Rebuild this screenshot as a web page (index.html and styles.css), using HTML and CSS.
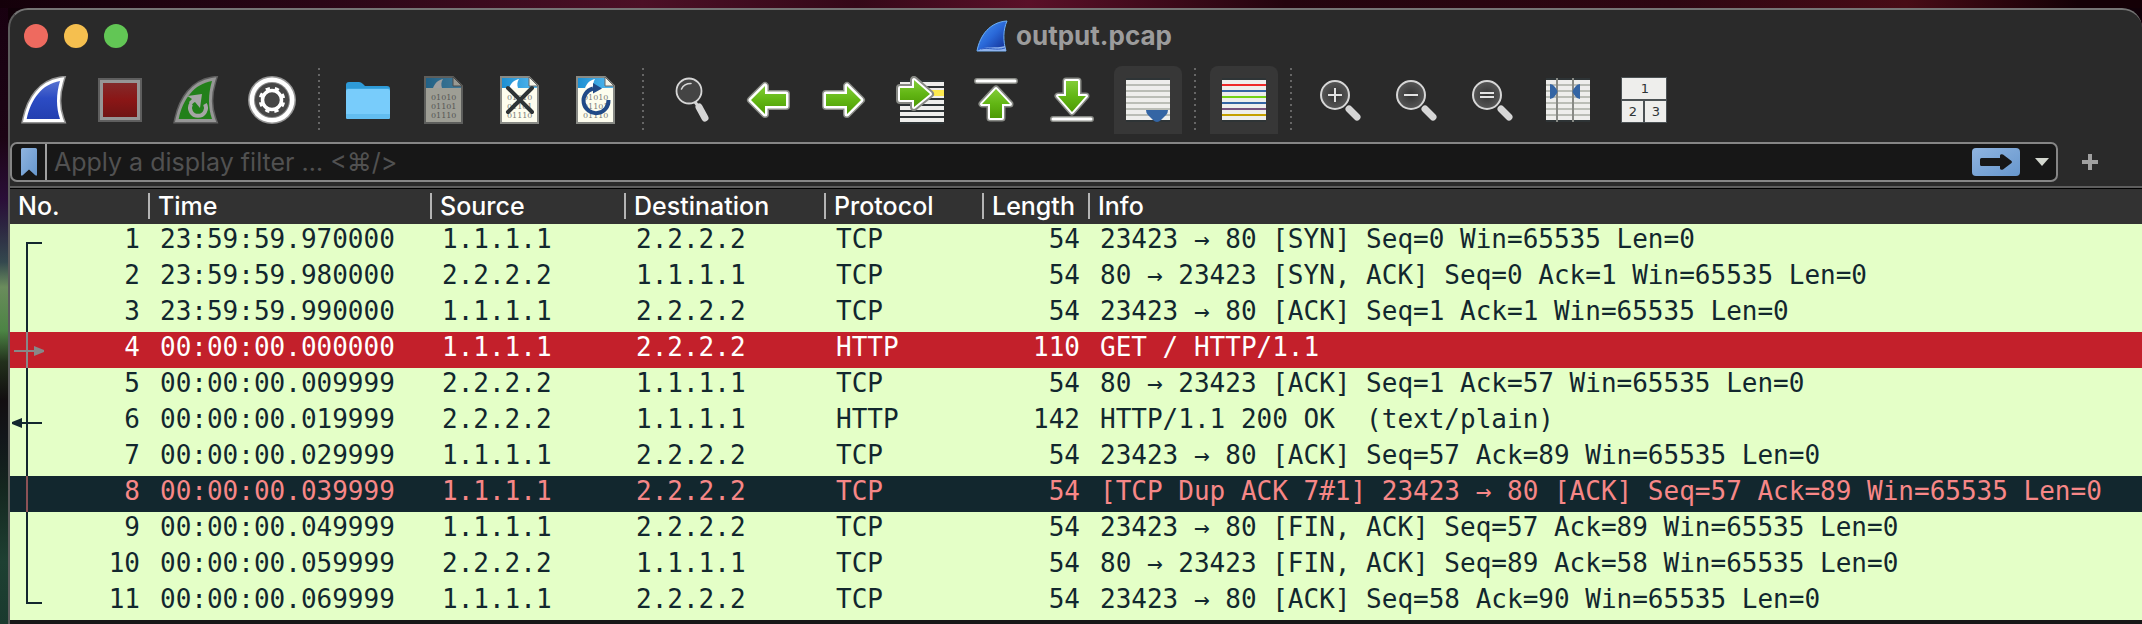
FILE: index.html
```html
<!DOCTYPE html>
<html lang="en">
<head>
<meta charset="utf-8">
<title>output.pcap</title>
<link rel="stylesheet" href="styles.css">
</head>
<body>
<svg class="defs" aria-hidden="true">
  <defs>
    <linearGradient id="g-blue" x1="0" y1="0" x2="0" y2="1"><stop offset="0" stop-color="#5872d0"/><stop offset=".45" stop-color="#2c4cc4"/><stop offset="1" stop-color="#2440b0"/></linearGradient>
    <linearGradient id="g-red" x1="0" y1="0" x2="0" y2="1"><stop offset="0" stop-color="#832a2a"/><stop offset=".5" stop-color="#8a1616"/><stop offset="1" stop-color="#701414"/></linearGradient>
    <linearGradient id="g-green" x1="0" y1="0" x2="0" y2="1"><stop offset="0" stop-color="#82cc38"/><stop offset=".5" stop-color="#62b614"/><stop offset="1" stop-color="#4e9a06"/></linearGradient>
    <linearGradient id="g-title" x1="0" y1="0" x2="1" y2="1"><stop offset="0" stop-color="#4c9df5"/><stop offset=".5" stop-color="#2a68d8"/><stop offset="1" stop-color="#10288c"/></linearGradient>
    <linearGradient id="g-sky" x1="0" y1="0" x2="1" y2="0"><stop offset="0" stop-color="#1c8fd2"/><stop offset="1" stop-color="#55b9f0"/></linearGradient>
    <linearGradient id="g-apply" x1="0" y1="0" x2="1" y2="1"><stop offset="0" stop-color="#8fb4e0"/><stop offset="1" stop-color="#6797cd"/></linearGradient>
    <radialGradient id="g-lens"><stop offset="0" stop-color="#333"/><stop offset="1" stop-color="#575757"/></radialGradient>
    <symbol id="doc" viewBox="0 0 48 48">
      <path d="M5 1H33L42 10V47H5Z" fill="#fdfdee" stroke="#888a85" stroke-width="2"/>
      <path d="M6 2H33V10H41V12H6Z" fill="url(#g-sky)"/>
      <path d="M13 12C15 7 18 4 23 3C21 6 21 9 22 12Z" fill="#fff"/>
      <path d="M33 1V10H42Z" fill="#f4f4e8" stroke="#666" stroke-width="1"/>
      <g class="bits"><text x="11" y="24">01010</text><text x="11" y="33">01101</text><text x="11" y="42">01110</text></g>
    </symbol>
    <symbol id="arrow" viewBox="0 0 48 48">
      <path d="M41 24L27 10V18H6V30H27V38Z" fill="#888a85" stroke="#888a85" stroke-width="8" stroke-linejoin="round"/>
      <path d="M41 24L27 10V18H6V30H27V38Z" fill="url(#g-green)" stroke="#fff" stroke-width="5" stroke-linejoin="round" paint-order="stroke"/>
    </symbol>
    <symbol id="lens" viewBox="0 0 48 48">
      <path d="M33 33L41 41" stroke="#d6d6d6" stroke-width="7" stroke-linecap="round"/>
      <circle cx="19" cy="19" r="14" fill="url(#g-lens)" stroke="#d6d6d6" stroke-width="2"/>
    </symbol>
  </defs>
</svg>

<main class="window">
  <header class="titlebar">
    <div class="lights">
      <button class="light close" aria-label="Close"></button>
      <button class="light minimize" aria-label="Minimize"></button>
      <button class="light zoom" aria-label="Zoom"></button>
    </div>
    <h1 class="title">
      <svg class="title-icon" viewBox="0 0 32 32"><path d="M1 31C4 15 14 2 31 1C27 10 27 21 30 31Z" fill="url(#g-title)" stroke="#6fb0f4" stroke-width="1"/><path d="M1.500 31C9 25 20 29 29 26L30 31Z" fill="#8fb3ee"/><path d="M5 29C13 27 20 31 29 28" fill="none" stroke="#2f5cc0" stroke-width="1"/></svg>
      output.pcap
    </h1>
  </header>

  <nav class="toolbar" aria-label="Main toolbar">
    <button class="tool" aria-label="Start capture"><svg viewBox="0 0 48 48"><path d="M6.700 43C11 23 22 8 40 5C36 18 36 32 40 43Z" fill="none" stroke="#949494" stroke-width="9"/><path d="M6.700 43C11 23 22 8 40 5C36 18 36 32 40 43Z" fill="url(#g-blue)" stroke="#fff" stroke-width="6" paint-order="stroke"/></svg></button>
    <button class="tool" aria-label="Stop capture"><svg viewBox="0 0 48 48"><path d="M2 2H46V46H2Z" fill="#5e5e5e"/><path d="M4 4H44V44H4Z" fill="#969696"/><path d="M7 7H41V41H7Z" fill="url(#g-red)"/></svg></button>
    <button class="tool" aria-label="Restart capture"><svg viewBox="0 0 48 48"><path d="M6.700 43C11 23 22 8 40 5C36 18 36 32 40 43Z" fill="none" stroke="#5e5e5e" stroke-width="9"/><path d="M6.700 43C11 23 22 8 40 5C36 18 36 32 40 43Z" fill="#22801a" stroke="#969696" stroke-width="6" paint-order="stroke"/><path d="M19 28A8 8 0 1 0 33 28" fill="none" stroke="#a6a6a6" stroke-width="4"/><path d="M15.500 20L30 18L28 32L23 26C21 27 20 28 19 30L17 26L20 23Z" fill="#a6a6a6"/></svg></button>
    <button class="tool" aria-label="Capture options"><svg viewBox="0 0 48 48"><circle cx="24" cy="24" r="24" fill="#969696"/><circle cx="24" cy="24" r="22.500" fill="#fff"/><circle cx="24" cy="24" r="18" fill="#888"/><circle cx="24" cy="24" r="17" fill="#464646"/><circle cx="24" cy="24" r="9.500" fill="none" stroke="#fff" stroke-width="3.500"/><circle cx="24" cy="24" r="11.700" fill="none" stroke="#fff" stroke-width="3.200" stroke-dasharray="4.200 4.989" stroke-dashoffset="-2.500"/></svg></button>
    <span class="sep"></span>
    <button class="tool" aria-label="Open file"><svg viewBox="0 0 48 48"><path d="M2 9Q2 6 5 6H15Q17 6 19 8L21 10H43Q46 10 46 13V20H2Z" fill="#2e9bd8"/><rect x="2" y="12" width="44" height="31" rx="2" fill="#3aa5e0"/><rect x="2" y="13" width="44" height="30" rx="2" fill="#78ccfb"/><path d="M2 38H46V41Q46 43 44 43H4Q2 43 2 41Z" fill="#62bdf0"/></svg></button>
    <button class="tool" aria-label="Save file" disabled><svg class="dim" viewBox="0 0 48 48"><use href="#doc"/></svg></button>
    <button class="tool" aria-label="Close file"><svg viewBox="0 0 48 48"><use href="#doc"/><path d="M12 12L36 36M36 12L12 36" stroke="#2e3436" stroke-width="4" stroke-linecap="round"/></svg></button>
    <button class="tool" aria-label="Reload file"><svg viewBox="0 0 48 48"><use href="#doc"/><path d="M36.500 24A12.500 12.500 0 1 1 21 12.500" fill="none" stroke="#204a87" stroke-width="4"/><path d="M21 7L30 12.500L21 17.500Z" fill="#204a87"/></svg></button>
    <span class="sep"></span>
    <button class="tool" aria-label="Find packet"><svg viewBox="0 0 48 48"><path d="M27 26L30 30" stroke="#d6d6d6" stroke-width="3"/><path d="M31 31L37 42" stroke="#d6d6d6" stroke-width="7" stroke-linecap="round"/><circle cx="21" cy="15" r="12.500" fill="#444" stroke="#d6d6d6" stroke-width="1.800"/><path d="M13.500 13Q16 7.500 23 7.500" fill="none" stroke="#d6d6d6" stroke-width="1.600" stroke-linecap="round"/></svg></button>
    <button class="tool" aria-label="Previous packet"><svg viewBox="0 0 48 48"><use href="#arrow" transform="matrix(-1 0 0 1 48 0)"/></svg></button>
    <button class="tool" aria-label="Next packet"><svg viewBox="0 0 48 48"><use href="#arrow"/></svg></button>
    <button class="tool" aria-label="Go to packet"><svg viewBox="0 0 48 48"><path d="M4 4H48V48H4Z" fill="#2e3436"/><path d="M4 8H48M4 14H48M4 20H48M4 26H48M4 32H48M4 38H48M4 44H48" stroke="#eeeeec" stroke-width="4"/><path d="M30 14H48V20H30Z" fill="#fce94f"/><path d="M34 18L18 4V12H4V24H18V31Z" fill="#888a85" stroke="#888a85" stroke-width="8" stroke-linejoin="round"/><path d="M34 18L18 4V12H4V24H18V31Z" fill="url(#g-green)" stroke="#fff" stroke-width="4" stroke-linejoin="round" paint-order="stroke"/></svg></button>
    <button class="tool" aria-label="First packet"><svg viewBox="0 0 48 48"><path d="M5 5H43" stroke="#888a85" stroke-width="6" stroke-linecap="round"/><path d="M5 5H43" stroke="#fff" stroke-width="3" stroke-linecap="round"/><path d="M24 13L10 28H18V42H30V28H38Z" fill="#888a85" stroke="#888a85" stroke-width="7" stroke-linejoin="round"/><path d="M24 13L10 28H18V42H30V28H38Z" fill="url(#g-green)" stroke="#fff" stroke-width="4" stroke-linejoin="round" paint-order="stroke"/></svg></button>
    <button class="tool" aria-label="Last packet"><svg viewBox="0 0 48 48"><path d="M5 43H43" stroke="#888a85" stroke-width="6" stroke-linecap="round"/><path d="M5 43H43" stroke="#fff" stroke-width="3" stroke-linecap="round"/><path d="M24 36L10 20H18V5H30V20H38Z" fill="#888a85" stroke="#888a85" stroke-width="7" stroke-linejoin="round"/><path d="M24 36L10 20H18V5H30V20H38Z" fill="url(#g-green)" stroke="#fff" stroke-width="4" stroke-linejoin="round" paint-order="stroke"/></svg></button>
    <button class="tool on" aria-label="Auto scroll" aria-pressed="true"><svg viewBox="0 0 48 48"><path d="M2 2H46V46H2Z" fill="#2e3436"/><path d="M2 4H46V44H2Z" fill="#eeeeec"/><path d="M2 9H46M2 15H46M2 21H46M2 27H46M2 33H46M2 39H46" stroke="#babdb6" stroke-width="2"/><path d="M22 34H44Q44 37 42 39L37 44Q33 48 29 44L24 39Q22 37 22 34Z" fill="#3465a4"/></svg></button>
    <span class="sep"></span>
    <button class="tool on" aria-label="Colorize packets" aria-pressed="true"><svg viewBox="0 0 48 48"><path d="M2 2H46V46H2Z" fill="#2e3436"/><path d="M2 4H46V44H2Z" fill="#eeeeec"/><g stroke-width="2"><path d="M2 9H46" stroke="#ef2929"/><path d="M2 15H46M2 27H46" stroke="#3465a4"/><path d="M2 21H46" stroke="#73d216"/><path d="M2 33H46" stroke="#75507b"/><path d="M2 39H46" stroke="#c4a000"/></g></svg></button>
    <span class="sep"></span>
    <button class="tool" aria-label="Zoom in"><svg viewBox="0 0 48 48"><use href="#lens"/><path d="M12 19H26M19 12V26" stroke="#e2e2e2" stroke-width="2"/></svg></button>
    <button class="tool" aria-label="Zoom out"><svg viewBox="0 0 48 48"><use href="#lens"/><path d="M12 19H26" stroke="#e2e2e2" stroke-width="2"/></svg></button>
    <button class="tool" aria-label="Normal size"><svg viewBox="0 0 48 48"><use href="#lens"/><path d="M12 17H26M12 21H26" stroke="#e2e2e2" stroke-width="2"/></svg></button>
    <button class="tool" aria-label="Resize columns"><svg viewBox="0 0 48 48"><path d="M2 2H46V46H2Z" fill="#2e3436"/><path d="M2 4H46V44H2Z" fill="#eeeeec"/><path d="M2 9H46M2 15H46M2 21H46M2 27H46M2 33H46M2 39H46" stroke="#babdb6" stroke-width="2"/><path d="M13 2V46M29 2V46" stroke="#888a85" stroke-width="2"/><path d="M6 8Q9 8 11 11L13 14Q14 15.500 13 17L11 20Q9 23 6 23ZM36 8Q33 8 31 11L29 14Q28 15.500 29 17L31 20Q33 23 36 23Z" fill="#3465a4"/></svg></button>
    <button class="tool" aria-label="Reset layout"><svg viewBox="0 0 48 48"><path d="M1 1H47V47H1Z" fill="#4b5154"/><path d="M2 2H46V23H2ZM2 25H23V46H2ZM25 25H46V46H25Z" fill="#eeeeec"/><g class="panes"><text x="25" y="17">1</text><text x="13" y="40">2</text><text x="36" y="40">3</text></g></svg></button>
  </nav>

  <form class="filter-row">
    <div class="filter">
      <button class="bookmark" type="button" aria-label="Filter bookmarks"><svg viewBox="0 0 16 28"><path d="M0 1.500Q0 0 1.500 0H14.500Q16 0 16 1.500V27Q15.500 28.500 14 27L8 21.500L2 27Q.5 28.500 0 27Z" fill="url(#g-apply)"/></svg></button>
      <input class="filter-input" type="text" aria-label="Display filter" placeholder="Apply a display filter … &lt;⌘/&gt;">
      <button class="apply" type="button" aria-label="Apply filter"><svg viewBox="0 0 48 28"><rect width="48" height="28" rx="4" fill="url(#g-apply)"/><path d="M9.500 10H28V7.500Q28.500 5.500 31 6.500L39.500 13Q40.500 14 39.500 15L31 21.500Q28.500 22.500 28 20.500V18H9.500Q8 18 8 16.500V11.500Q8 10 9.500 10Z" fill="#171717"/></svg></button>
      <button class="recent" type="button" aria-label="Recent filters"><svg viewBox="0 0 14 8"><path d="M0 0H14L7 8Z" fill="#d3d7cf"/></svg></button>
    </div>
    <button class="add" type="button" aria-label="Add filter button"><svg viewBox="0 0 16 16"><path d="M0 8H16M8 0V16" stroke="#a0a0a0" stroke-width="4"/></svg></button>
  </form>

  <section class="packets">
    <table>
      <colgroup><col class="c-no"><col class="c-time"><col class="c-src"><col class="c-dst"><col class="c-proto"><col class="c-len"><col></colgroup>
      <thead>
        <tr><th><span>No.</span></th><th><span>Time</span></th><th><span>Source</span></th><th><span>Destination</span></th><th><span>Protocol</span></th><th><span>Length</span></th><th><span>Info</span></th></tr>
      </thead>
      <tbody>
        <tr><td class="num"><div class="no"><svg viewBox="0 0 36 36"><path d="M32 19H17V36"/></svg>1</div></td><td>23:59:59.970000</td><td>1.1.1.1</td><td>2.2.2.2</td><td>TCP</td><td class="num">54</td><td>23423 → 80 [SYN] Seq=0 Win=65535 Len=0</td></tr>
        <tr><td class="num"><div class="no"><svg viewBox="0 0 36 36"><path d="M17 0V36"/></svg>2</div></td><td>23:59:59.980000</td><td>2.2.2.2</td><td>1.1.1.1</td><td>TCP</td><td class="num">54</td><td>80 → 23423 [SYN, ACK] Seq=0 Ack=1 Win=65535 Len=0</td></tr>
        <tr><td class="num"><div class="no"><svg viewBox="0 0 36 36"><path d="M17 0V36"/></svg>3</div></td><td>23:59:59.990000</td><td>1.1.1.1</td><td>2.2.2.2</td><td>TCP</td><td class="num">54</td><td>23423 → 80 [ACK] Seq=1 Ack=1 Win=65535 Len=0</td></tr>
        <tr class="http-get"><td class="num"><div class="no"><svg viewBox="0 0 36 36"><path d="M17 0V36M4 19H26"/><path class="head" d="M24 14L34 18V20L24 24Z"/></svg>4</div></td><td>00:00:00.000000</td><td>1.1.1.1</td><td>2.2.2.2</td><td>HTTP</td><td class="num">110</td><td>GET / HTTP/1.1</td></tr>
        <tr><td class="num"><div class="no"><svg viewBox="0 0 36 36"><path d="M17 0V36"/></svg>5</div></td><td>00:00:00.009999</td><td>2.2.2.2</td><td>1.1.1.1</td><td>TCP</td><td class="num">54</td><td>80 → 23423 [ACK] Seq=1 Ack=57 Win=65535 Len=0</td></tr>
        <tr><td class="num"><div class="no"><svg viewBox="0 0 36 36"><path d="M17 0V36M10 19H32"/><path class="head" d="M12 14L2 18V20L12 24Z"/></svg>6</div></td><td>00:00:00.019999</td><td>2.2.2.2</td><td>1.1.1.1</td><td>HTTP</td><td class="num">142</td><td>HTTP/1.1 200 OK  (text/plain)</td></tr>
        <tr><td class="num"><div class="no"><svg viewBox="0 0 36 36"><path d="M17 0V36"/></svg>7</div></td><td>00:00:00.029999</td><td>1.1.1.1</td><td>2.2.2.2</td><td>TCP</td><td class="num">54</td><td>23423 → 80 [ACK] Seq=57 Ack=89 Win=65535 Len=0</td></tr>
        <tr class="bad-tcp"><td class="num"><div class="no"><svg viewBox="0 0 36 36"><path d="M17 0V36"/></svg>8</div></td><td>00:00:00.039999</td><td>1.1.1.1</td><td>2.2.2.2</td><td>TCP</td><td class="num">54</td><td>[TCP Dup ACK 7#1] 23423 → 80 [ACK] Seq=57 Ack=89 Win=65535 Len=0</td></tr>
        <tr><td class="num"><div class="no"><svg viewBox="0 0 36 36"><path d="M17 0V36"/></svg>9</div></td><td>00:00:00.049999</td><td>1.1.1.1</td><td>2.2.2.2</td><td>TCP</td><td class="num">54</td><td>23423 → 80 [FIN, ACK] Seq=57 Ack=89 Win=65535 Len=0</td></tr>
        <tr><td class="num"><div class="no"><svg viewBox="0 0 36 36"><path d="M17 0V36"/></svg>10</div></td><td>00:00:00.059999</td><td>2.2.2.2</td><td>1.1.1.1</td><td>TCP</td><td class="num">54</td><td>80 → 23423 [FIN, ACK] Seq=89 Ack=58 Win=65535 Len=0</td></tr>
        <tr><td class="num"><div class="no"><svg viewBox="0 0 36 36"><path d="M17 0V19H32"/></svg>11</div></td><td>00:00:00.069999</td><td>1.1.1.1</td><td>2.2.2.2</td><td>TCP</td><td class="num">54</td><td>23423 → 80 [ACK] Seq=58 Ack=90 Win=65535 Len=0</td></tr>
      </tbody>
    </table>
  </section>
</main>
</body>
</html>
```

FILE: styles.css
```css
* { box-sizing: border-box; }

body {
  margin: 0;
  min-height: 100vh;
  padding: 8px 0 0 8px;
  font-family: Inter, "Liberation Sans", sans-serif;
  color: #fff;
  background:
    linear-gradient(90deg, #14000a 0%, #2a0616 15%, #4c1026 30%, #340818 40%, #5a1028 48%, #24040e 60%, #2e0612 78%, #480c16 89%, #140006 97%) 0 0 / 100% 8px no-repeat,
    linear-gradient(180deg, #180010 0%, #1c0414 22%, #2a0e38 32%, #2c2440 36%, #34484e 42%, #6a8c5c 46%, #4c8444 53%, #22301c 58%, #120e10 64%, #12161a 70%, #14261f 78%, #1e4032 90%, #1a3a2e 100%) 0 0 / 8px 100% no-repeat,
    #100008;
}

button {
  display: flex;
  align-items: center;
  justify-content: center;
  margin: 0;
  padding: 0;
  border: 0;
  background: none;
}

svg { display: block; }

.defs {
  position: absolute;
  width: 0;
  height: 0;
}

.window {
  display: flex;
  flex-direction: column;
  min-height: calc(100vh - 8px);
  border: 2px solid #5c5c5c;
  border-top-color: #757575;
  border-bottom: 0;
  border-right: 0;
  border-radius: 20px 20px 0 0;
  overflow: hidden;
  background: #2a2a2a;
}

.titlebar {
  display: grid;
  grid-template-columns: 1fr auto 1fr;
  align-items: center;
  height: 52px;
  padding: 0 18px 0 14px;
}

.lights { display: flex; gap: 16px; }

.light {
  width: 24px;
  height: 24px;
  border-radius: 50%;
}

.close { background: #ee6a5f; }
.minimize { background: #f5bf4f; }
.zoom { background: #62c655; }

.title {
  display: flex;
  align-items: center;
  gap: 8px;
  margin: 0;
  font-size: 26px;
  font-weight: 700;
  line-height: 32px;
  color: #9c9c9c;
}

.title-icon { width: 32px; height: 32px; }

.toolbar {
  display: flex;
  gap: 8px;
  padding: 4px 0 8px;
}

.tool {
  width: 68px;
  height: 68px;
  border-radius: 8px 8px 0 0;
}

.tool svg { width: 48px; height: 48px; }
.tool.on { background: #373737; }
.dim { opacity: 0.55; }

.bits {
  font: 8px "DejaVu Serif", serif;
  fill: #7c7e7a;
}

.panes {
  font: 13px "DejaVu Sans", sans-serif;
  text-anchor: middle;
  fill: #2e3436;
}

.sep {
  width: 12px;
  height: 62px;
  margin-top: 2px;
  background: repeating-linear-gradient(180deg, #666 0 2px, transparent 2px 6px) 4px 0 / 2px 100% no-repeat;
}

.filter-row {
  display: flex;
  align-items: center;
  margin: 0;
  padding-bottom: 4px;
}

.filter {
  display: flex;
  flex: 1;
  align-items: center;
  height: 40px;
  border: 2px solid #868686;
  border-radius: 7px;
  background: #171717;
}

.bookmark {
  width: 35px;
  height: 36px;
  border-right: 2px solid #a0a0a0;
}

.bookmark svg { width: 16px; height: 28px; }

.filter-input {
  flex: 1;
  min-width: 0;
  height: 36px;
  padding: 0 7px;
  border: 0;
  outline: 0;
  background: none;
  color: #fff;
  font: 25px Inter, "DejaVu Sans", sans-serif;
}

.filter-input::placeholder { color: #515151; opacity: 1; }

.apply svg { width: 48px; height: 28px; }
.recent { margin: 0 7px 0 15px; }
.recent svg { width: 14px; height: 8px; }

.add { margin: 0 44px 0 24px; }
.add svg { width: 16px; height: 16px; }

.packets {
  flex: 1;
  border-top: 2px solid #5e5e5e;
  background: #171717;
}

table {
  width: 100%;
  border-collapse: collapse;
  table-layout: fixed;
}

.c-no { width: 140px; }
.c-time { width: 282px; }
.c-src { width: 194px; }
.c-dst { width: 200px; }
.c-proto { width: 158px; }
.c-len { width: 106px; }

thead tr {
  background: #323232;
  box-shadow: inset 0 1px #000;
}

th {
  height: 36px;
  padding: 5px 0;
  text-align: left;
  vertical-align: top;
  font-size: 25px;
  font-weight: 500;
}

th span {
  display: block;
  padding-left: 8px;
  border-right: 2px solid #b4b4b4;
  line-height: 26px;
}

th:last-child span { border-right: 0; }

tbody tr {
  background: #e4ffc7;
  color: #12272e;
}

tbody tr.http-get { background: #c3202b; color: #fff; }
tbody tr.bad-tcp { background: #12272e; color: #f78787; }

td {
  height: 36px;
  padding: 0 10px;
  vertical-align: top;
  font: 26px/30px "DejaVu Sans Mono", monospace;
  white-space: pre;
}

.num { text-align: right; }
td.num:first-child { padding-left: 0; }

.no { display: flex; justify-content: space-between; }

.no svg {
  width: 36px;
  height: 36px;
  fill: none;
  stroke: currentColor;
  stroke-width: 2;
}

.no .head { fill: currentColor; stroke: none; }
.http-get .no svg { color: #888; }
.bad-tcp .no svg { color: #8c5256; }
```
